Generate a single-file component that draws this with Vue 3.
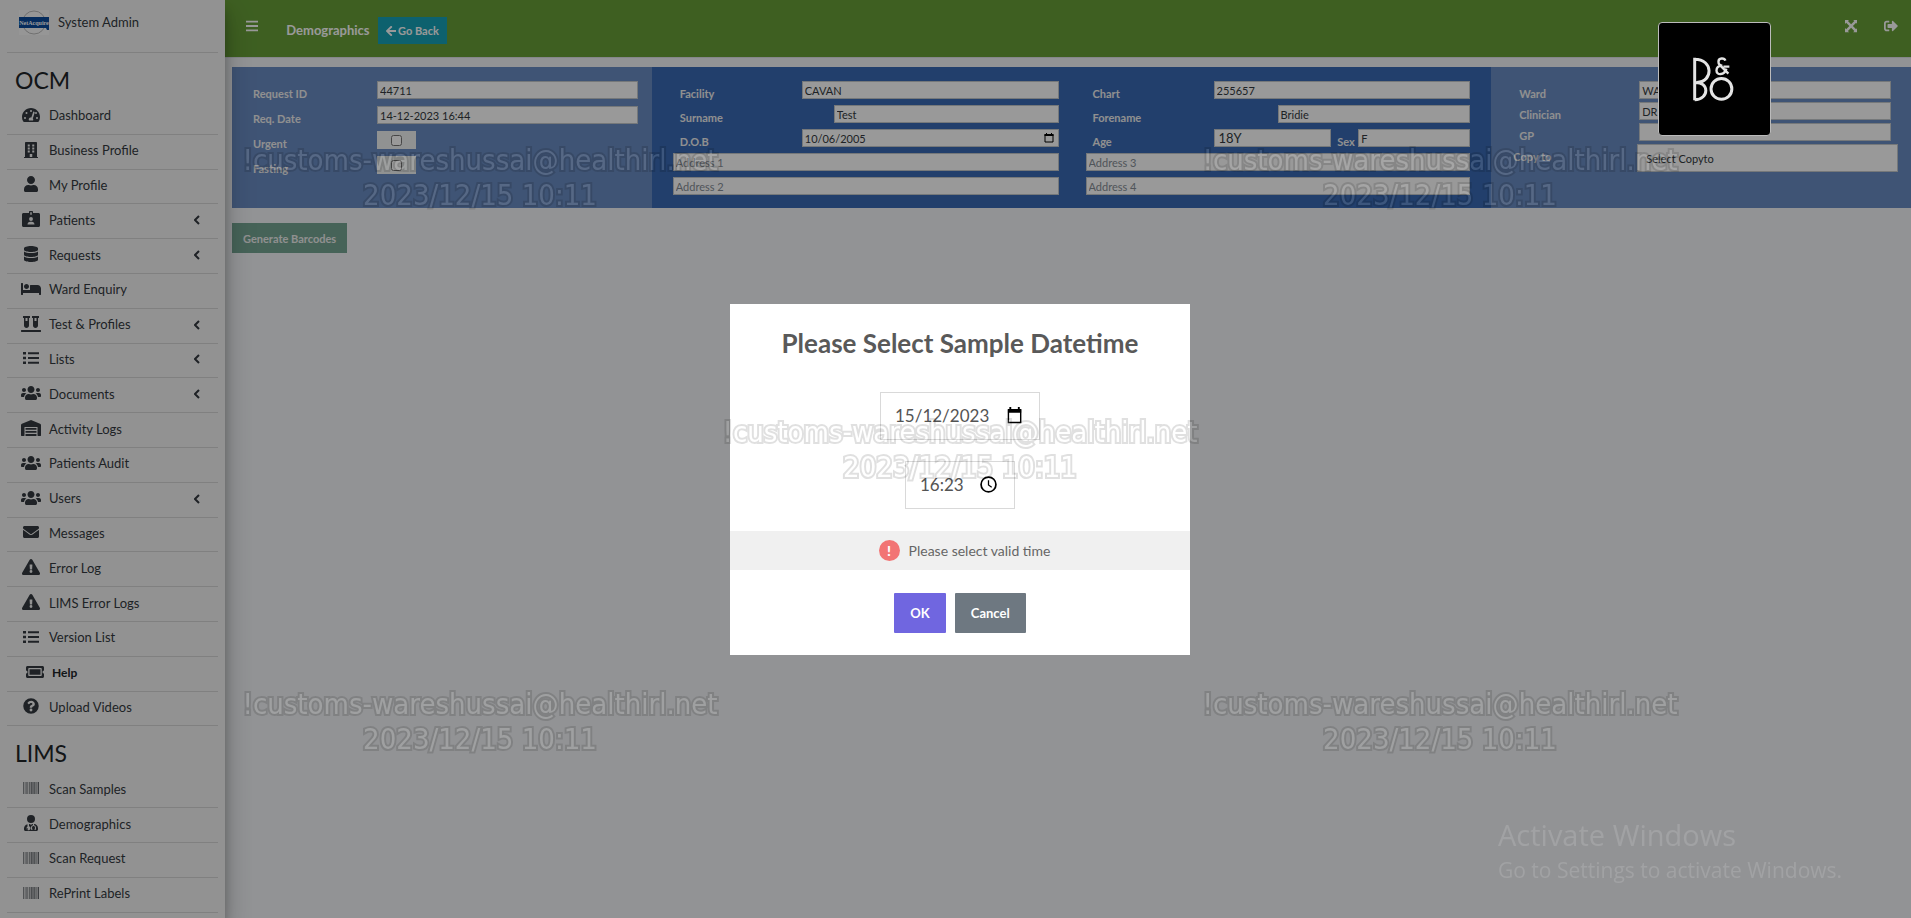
<script setup>
import { ref } from 'vue'

const shapes = {
  gauge: ['0 0 576 512', 'M288 32C129 32 0 161 0 320c0 53 14 102 39 145 6 9 16 15 27 15h444c11 0 21-6 27-15 25-43 39-92 39-145C576 161 447 32 288 32zM288 96a32 32 0 1 1 0 64 32 32 0 0 1 0-64zM96 384a32 32 0 1 1 0-64 32 32 0 0 1 0 64zM144 224a32 32 0 1 1 0-64 32 32 0 0 1 0 64zM391 155c13 4 20 18 15 30l-61 184c16 17 20 44 7 63H224c-20-30-3-80 35-94 14-5 27-5 40-1l61-183c5-13 18-3 31 1zM448 224a32 32 0 1 1 0-64 32 32 0 0 1 0 64zM480 384a32 32 0 1 1 0-64 32 32 0 0 1 0 64z'],
  building: ['0 0 448 512', 'M436 480h-20V24c0-13-11-24-24-24H56C43 0 32 11 32 24v456H12c-7 0-12 5-12 12v20h448v-20c0-7-5-12-12-12zM120 76h64v64h-64zM264 76h64v64h-64zM120 172h64v64h-64zM264 172h64v64h-64zM120 268h64v64h-64zM264 268h64v64h-64zM184 384h80v96h-80z'],
  user: ['0 0 448 512', 'M224 256c70.7 0 128-57.3 128-128S294.700 0 224 0 96 57.300 96 128s57.300 128 128 128zm89.600 32h-16.700c-22.200 10.200-46.900 16-72.900 16s-50.600-5.800-72.900-16h-16.700C60.200 288 0 348.200 0 422.400V464c0 26.500 21.500 48 48 48h352c26.500 0 48-21.500 48-48v-41.600c0-74.200-60.200-134.400-134.400-134.400z'],
  badge: ['0 0 576 512', 'M528 64H352V32c0-18-14-32-32-32h-64c-18 0-32 14-32 32v32H48C21 64 0 85 0 112v352c0 27 21 48 48 48h480c27 0 48-21 48-48V112c0-27-21-48-48-48zM264 40h48v80h-48zM288 192a62 62 0 1 1 0 124 62 62 0 0 1 0-124zM176 432c0-50 36-88 84-88h56c48 0 84 38 84 88z'],
  database: ['0 0 448 512', 'M448 73v46c0 40-100 73-224 73S0 159 0 119V73C0 33 100 0 224 0s224 33 224 73zM448 176v103c0 40-100 73-224 73S0 319 0 279V176c48 33 136 49 224 49s176-16 224-49zm0 160v103c0 40-100 73-224 73S0 479 0 439V336c48 33 136 49 224 49s176-16 224-49z'],
  bed: ['0 0 640 512', 'M176 256c44 0 80-36 80-80s-36-80-80-80-80 36-80 80 36 80 80 80zm352-128H304c-9 0-16 7-16 16v144H64V80c0-9-7-16-16-16H16C7 64 0 71 0 80v352c0 9 7 16 16 16h32c9 0 16-7 16-16v-48h512v48c0 9 7 16 16 16h32c9 0 16-7 16-16V240c0-62-50-112-112-112z'],
  vials: ['0 0 640 512', 'M72 64h24v240c0 44 36 80 80 80s80-36 80-80V64h24c4 0 8-4 8-8V8c0-4-4-8-8-8H72c-4 0-8 4-8 8v48c0 4 4 8 8 8zM144 64h64v96h-64zM624 448H16c-9 0-16 7-16 16v32c0 9 7 16 16 16h608c9 0 16-7 16-16v-32c0-9-7-16-16-16zM360 64h24v240c0 44 36 80 80 80s80-36 80-80V64h24c4 0 8-4 8-8V8c0-4-4-8-8-8H360c-4 0-8 4-8 8v48c0 4 4 8 8 8zM432 64h64v96h-64z'],
  list: ['0 0 512 512', 'M0 64h96v80H0zM0 216h96v80H0zM0 368h96v80H0zM160 72h352v64H160zM160 224h352v64H160zM160 376h352v64H160z'],
  users: ['0 0 640 512', 'M96 224c35 0 64-29 64-64s-29-64-64-64-64 29-64 64 29 64 64 64zm448 0c35 0 64-29 64-64s-29-64-64-64-64 29-64 64 29 64 64 64zm32 32h-64c-18 0-34 7-45 19 40 22 69 62 75 109h66c18 0 32-14 32-32v-32c0-35-29-64-64-64zm-256 0c62 0 112-50 112-112S382 32 320 32 208 82 208 144s50 112 112 112zm77 32h-8c-21 10-44 16-69 16s-48-6-69-16h-8c-63 0-115 52-115 115v29c0 27 22 48 48 48h288c27 0 48-21 48-48v-29c0-63-52-115-115-115zm-224-13c-11-12-27-19-45-19H64c-35 0-64 29-64 64v32c0 18 14 32 32 32h66c6-47 35-87 75-109z'],
  warehouse: ['0 0 640 512', 'M610 117L339 4a48 48 0 0 0-37 0L30 117C12 125 0 142 0 161v335c0 9 7 16 16 16h80c9 0 16-7 16-16V224h416v272c0 9 7 16 16 16h80c9 0 16-7 16-16V161c0-19-12-36-30-44zM144 256h352v56H144zM144 352h352v56H144zM144 448h352v64H144z'],
  envelope: ['0 0 512 512', 'M502 191c4-3 10 0 10 5v204c0 27-21 48-48 48H48c-27 0-48-21-48-48V196c0-5 6-8 10-5 22 17 52 39 154 113 21 16 57 48 92 48 36 0 72-33 92-48 102-74 132-96 154-113zM256 320c23 0 57-29 73-41 133-97 143-105 174-129 6-5 9-12 9-19v-19c0-27-21-48-48-48H48c-27 0-48 21-48 48v19c0 7 3 14 9 19 31 24 41 32 174 129 16 12 50 41 73 41z'],
  warning: ['0 0 576 512', 'M570 440c18 32-5 72-42 72H48c-37 0-60-40-42-72L246 24c19-32 65-32 84 0l240 416zM288 354a46 46 0 1 0 0 92 46 46 0 0 0 0-92zm-44-165l8 136c0 6 5 11 12 11h48c7 0 12-5 12-11l8-136c0-7-5-13-12-13h-64c-7 0-12 6-12 13z'],
  ticket: ['0 0 576 512', 'M576 208v-96c0-27-21-48-48-48H48c-27 0-48 21-48 48v96a48 48 0 0 1 0 96v96c0 27 21 48 48 48h480c27 0 48-21 48-48v-96a48 48 0 0 1 0-96zM96 128h384c13 0 24 11 24 24v208c0 13-11 24-24 24H96c-13 0-24-11-24-24V152c0-13 11-24 24-24zM112 168v176h352V168z'],
  help: ['0 0 512 512', 'M504 256a248 248 0 1 1-496 0 248 248 0 0 1 496 0zM263 90c-55 0-90 23-117 64-4 5-2 12 3 16l35 26c5 4 12 3 16-2 18-23 31-36 58-36 20 0 45 13 45 33 0 15-12 23-32 34-24 14-55 30-55 71v4c0 7 5 12 12 12h56c7 0 12-5 12-12v-1c0-29 83-30 83-107 0-58-60-102-116-102zM256 338a46 46 0 1 0 0 92 46 46 0 0 0 0-92z'],
  barcode: ['0 0 512 512', 'M0 64h20v384H0zM28 64h12v384H28zM64 64h14v384H64zM110 64h24v384h-24zM148 64h14v384h-14zM188 64h26v384h-26zM230 64h12v384h-12zM262 64h30v384h-30zM306 64h26v384h-26zM346 64h30v384h-30zM392 64h14v384h-14zM432 64h28v384h-28zM480 64h32v384h-32z'],
  doctor: ['0 0 448 512', 'M224 256a128 128 0 1 0 0-256 128 128 0 0 0 0 256zM104 424a24 24 0 1 1 0 48 24 24 0 0 1 0-48zM320 289v36c36 8 64 40 64 79v64h-48v-32h16v-32c0-30-23-52-48-52s-48 22-48 52v32h16v32h-48v-64c0-39 28-71 64-79v-37h-16l-48 20-48-20h-16v73c28 7 48 33 48 63a64 64 0 1 1-96-56v-76C46 308 0 360 0 422v42c0 27 21 48 48 48h352c27 0 48-21 48-48v-42c0-72-56-131-128-133z'],
  bars: ['0 0 448 512', 'M0 60h448v72H0zM0 220h448v72H0zM0 380h448v72H0z'],
  back: ['0 0 448 512', 'M258 444l-22 22c-10 9-25 9-34 0L7 273c-9-9-9-25 0-34L202 46c9-9 24-9 34 0l22 22c9 10 9 25 0 34L138 216h286c13 0 24 11 24 24v32c0 13-11 24-24 24H138l120 114c9 9 9 24 0 34z'],
  expand: ['0 0 448 512', 'M0 32h150l-43 43 117 117L341 75l-43-43h150v150l-43-43-117 117 117 117 43-43v150H298l43-43-117-117-117 117 43 43H0V330l43 43 117-117L43 139 0 182z'],
  exit: ['0 0 512 512', 'M497 273L329 441c-15 15-41 5-41-17v-96H152c-13 0-24-11-24-24v-96c0-13 11-24 24-24h136V88c0-21 26-32 41-17l168 168c9 9 9 25 0 34zM192 436v-40c0-7-5-12-12-12H96c-18 0-32-14-32-32V160c0-18 14-32 32-32h84c7 0 12-5 12-12V76c0-7-5-12-12-12H96c-53 0-96 43-96 96v192c0 53 43 96 96 96h84c7 0 12-5 12-12z'],
}

const sections = [
  {
    title: 'OCM',
    items: [
      { label: 'Dashboard', icon: 'gauge' },
      { label: 'Business Profile', icon: 'building' },
      { label: 'My Profile', icon: 'user' },
      { label: 'Patients', icon: 'badge', sub: true },
      { label: 'Requests', icon: 'database', sub: true },
      { label: 'Ward Enquiry', icon: 'bed' },
      { label: 'Test & Profiles', icon: 'vials', sub: true },
      { label: 'Lists', icon: 'list', sub: true },
      { label: 'Documents', icon: 'users', sub: true },
      { label: 'Activity Logs', icon: 'warehouse' },
      { label: 'Patients Audit', icon: 'users' },
      { label: 'Users', icon: 'users', sub: true },
      { label: 'Messages', icon: 'envelope' },
      { label: 'Error Log', icon: 'warning' },
      { label: 'LIMS Error Logs', icon: 'warning' },
      { label: 'Version List', icon: 'list' },
      { label: 'Help', icon: 'ticket', strong: true },
      { label: 'Upload Videos', icon: 'help' },
    ],
  },
  {
    title: 'LIMS',
    items: [
      { label: 'Scan Samples', icon: 'barcode', faint: true },
      { label: 'Demographics', icon: 'doctor' },
      { label: 'Scan Request', icon: 'barcode', faint: true },
      { label: 'RePrint Labels', icon: 'barcode', faint: true },
    ],
  },
]

const form = ref({
  request: '44711', date: '14-12-2023 16:44', urgent: false, fasting: false,
  facility: 'CAVAN', surname: 'Test', dob: '10/06/2005', a1: '', a2: '',
  chart: '255657', forename: 'Bridie', age: '18Y', sex: 'F', a3: '', a4: '',
  ward: 'WA', clinician: 'DR', gp: '',
})
const sampleDate = ref('15/12/2023')
const sampleTime = ref('16:23')
const marks = ['nw', 'ne', 'mid', 'sw', 'se']
</script>

<template>
  <div class="app">
    <aside class="sidebar">
      <div class="brand">
        <svg class="brand-logo" viewBox="0 0 30 25" aria-hidden="true">
          <rect width="30" height="25" fill="#fafafa" />
          <circle cx="15" cy="12.500" r="11.500" fill="none" stroke="#bbb" />
          <path d="M0 7h30v13h-2l-1-2H0z" fill="#0a4a9c" />
          <text x="15" y="15" text-anchor="middle" font-size="6" font-weight="700" fill="#fff" font-family="Liberation Serif, serif">NetAcquire</text>
        </svg>
        <span>System Admin</span>
      </div>
      <nav v-for="s in sections" :key="s.title">
        <h2>{{ s.title }}</h2>
        <ul>
          <li v-for="i in s.items" :key="i.label">
            <a href="#" :class="{ strong: i.strong }">
              <span class="slot" :class="{ faint: i.faint }">
                <svg :viewBox="shapes[i.icon][0]" aria-hidden="true"><path :d="shapes[i.icon][1]" fill-rule="evenodd" /></svg>
              </span>
              <span class="name">{{ i.label }}</span>
              <svg v-if="i.sub" class="chev" viewBox="0 0 6 10" aria-hidden="true"><path d="M5 1L1 5l4 4" /></svg>
            </a>
          </li>
        </ul>
      </nav>
    </aside>

    <div class="main">
      <header class="topbar">
        <button class="plain" aria-label="Toggle menu">
          <svg :viewBox="shapes.bars[0]"><path :d="shapes.bars[1]" /></svg>
        </button>
        <h1>Demographics</h1>
        <button class="go-back">
          <svg :viewBox="shapes.back[0]"><path :d="shapes.back[1]" /></svg>Go Back
        </button>
        <span class="spacer"></span>
        <button class="plain" aria-label="Full screen">
          <svg :viewBox="shapes.expand[0]"><path :d="shapes.expand[1]" /></svg>
        </button>
        <button class="plain exit" aria-label="Sign out">
          <svg :viewBox="shapes.exit[0]"><path :d="shapes.exit[1]" /></svg>
        </button>
      </header>

      <main>
        <form class="panels" @submit.prevent>
          <section class="panel request">
            <label for="rid">Request ID</label><input id="rid" v-model="form.request" class="field">
            <label for="rdate">Req. Date</label><input id="rdate" v-model="form.date" class="field">
            <label for="urgent">Urgent</label>
            <span class="tick"><input id="urgent" v-model="form.urgent" type="checkbox"></span>
            <label for="fasting">Fasting</label>
            <span class="tick"><input id="fasting" v-model="form.fasting" type="checkbox"></span>
          </section>

          <section class="panel dark left">
            <label for="fac">Facility</label><input id="fac" v-model="form.facility" class="field">
            <label for="sur">Surname</label><input id="sur" v-model="form.surname" class="field surname">
            <label for="dob">D.O.B</label>
            <span class="with-icon">
              <input id="dob" v-model="form.dob" class="field">
              <svg viewBox="0 0 10 10" aria-hidden="true"><path d="M1 1.500h8v7.500H1z" fill="none" stroke="#000" /><path d="M.5 1h9v2h-9zM2 0h1v1H2zM7 0h1v1H7z" /></svg>
            </span>
            <input v-model="form.a1" class="field wide" placeholder="Address 1" aria-label="Address 1">
            <input v-model="form.a2" class="field wide" placeholder="Address 2" aria-label="Address 2">
          </section>

          <section class="panel dark right">
            <label for="chart">Chart</label><input id="chart" v-model="form.chart" class="field">
            <label for="fore">Forename</label><input id="fore" v-model="form.forename" class="field forename">
            <label for="age">Age</label>
            <span class="age-sex">
              <input id="age" v-model="form.age" class="field age">
              <label for="sex">Sex</label>
              <input id="sex" v-model="form.sex" class="field sex">
            </span>
            <input v-model="form.a3" class="field wide" placeholder="Address 3" aria-label="Address 3">
            <input v-model="form.a4" class="field wide" placeholder="Address 4" aria-label="Address 4">
          </section>

          <section class="panel ward">
            <label for="ward">Ward</label><input id="ward" v-model="form.ward" class="field">
            <label for="clin">Clinician</label><input id="clin" v-model="form.clinician" class="field">
            <label for="gp">GP</label><input id="gp" v-model="form.gp" class="field">
            <label for="copy" class="copy-label">Copy to</label>
            <select id="copy" class="copy"><option>Select Copyto</option></select>
          </section>
        </form>
        <button class="generate">Generate Barcodes</button>
      </main>
    </div>

    <div class="overlay">
      <div class="modal" role="dialog" aria-labelledby="modal-title">
        <h2 id="modal-title">Please Select Sample Datetime</h2>
        <div class="picker date">
          <input v-model="sampleDate" aria-label="Sample date">
          <svg viewBox="0 0 16 18" aria-hidden="true"><path d="M1.500 3h13v13.500h-13z" fill="none" stroke="#000" stroke-width="1.500" /><path d="M1 2h14v4H1zM2.500 0h2v2h-2zM11.500 0h2v2h-2z" /></svg>
        </div>
        <div class="picker time">
          <input v-model="sampleTime" aria-label="Sample time">
          <svg viewBox="0 0 16 16" aria-hidden="true"><circle cx="8" cy="8" r="7" fill="none" stroke="#000" stroke-width="1.600" /><path d="M8 4v4.500l3 2" fill="none" stroke="#000" stroke-width="1.200" /></svg>
        </div>
        <p class="invalid"><span class="bang">!</span>Please select valid time</p>
        <div class="actions">
          <button class="ok">OK</button>
          <button class="cancel">Cancel</button>
        </div>
      </div>
    </div>

    <svg class="bo" viewBox="0 0 112 113" role="img" aria-label="B&amp;O">
      <g fill="none" stroke="#e4e4e4" stroke-width="3">
        <path d="M36 35v43M36 36.500c19 0 19 23 2 23.500M36 60c15-1 15 17 0 17.500" />
        <circle cx="63" cy="66.500" r="10.500" />
        <path stroke-width="2.400" d="M67 38c-1-3-7-3-7 1 0 3 2 4 4 4-4 0-6 2-6 5 0 5 8 5 10-2M62 43l8 8M65 44h6" />
      </g>
    </svg>

    <div v-for="m in marks" :key="m" class="mark" :class="m" aria-hidden="true">
      !customs-wareshussai@healthirl.net<br>2023/12/15 10:11
    </div>
    <div class="activate">
      <strong>Activate Windows</strong>
      <span>Go to Settings to activate Windows.</span>
    </div>
  </div>
</template>

<style>
html, body { overflow: hidden; background: #f4f6f9; }
</style>

<style scoped>
* { box-sizing: border-box; }
.app {
  display: flex;
  height: 100vh;
  overflow: hidden;
  font-family: Lato, "Open Sans", sans-serif;
  font-size: 13px;
  color: #343a40;
}
button, input, select { font: inherit; color: inherit; }
button { border: 0; padding: 0; }
h1, h2, p, ul { margin: 0; padding: 0; }

.sidebar {
  position: relative;
  z-index: 1;
  flex: 0 0 225px;
  padding: 0 7px;
  overflow: hidden;
  background: #f4f4f4;
  box-shadow: 0 14px 28px rgba(0, 0, 0, .25), 0 10px 10px rgba(0, 0, 0, .22);
}
.brand {
  display: flex;
  align-items: center;
  gap: 9px;
  height: 53px;
  padding: 0 12px 8px;
  border-bottom: 1px solid #d6d6d6;
}
.brand-logo { width: 30px; height: 25px; }
.sidebar h2 {
  height: 47px;
  padding: 10px 8px 0;
  font-size: 23px;
  font-weight: 400;
  line-height: 34px;
  color: #212529;
}
.sidebar ul { list-style: none; }
.sidebar li {
  border-bottom: 1px solid #d6d6d6;
  padding: 4px 0 6px;
  font-size: 14px;
  line-height: 1.7;
}
.sidebar a {
  display: flex;
  align-items: center;
  gap: 6px;
  padding: 0 18px 0 12px;
  color: #343a40;
  text-decoration: none;
}
.slot { display: flex; justify-content: center; width: 24px; margin-bottom: 2px; }
.slot svg { height: 16px; fill: #343a40; }
.slot.faint svg { opacity: .75; }
.name { flex: 1; font-size: 13px; line-height: inherit; }
.name { line-height: 1; }
.sidebar a { height: 1.7em; }
.chev { width: 6px; height: 10px; fill: none; stroke: #343a40; stroke-width: 2; }
.sidebar a.strong { padding-left: 16px; gap: 5px; color: #212529; }
.strong .name { font-size: 12px; font-weight: 700; }

.main { flex: 1; min-width: 0; }
.topbar {
  display: flex;
  align-items: center;
  height: 58px;
  padding: 0 13px 0 21px;
  background: #689f38;
  border-bottom: 1px solid #dee2e6;
  color: #fff;
}
.topbar svg { height: 14px; fill: #fff; }
.plain { display: flex; margin-bottom: 5px; background: none; }
.topbar h1 { margin: 2px 0 0 28px; font-size: 13px; font-weight: 700; }
.go-back {
  display: flex;
  align-items: center;
  gap: 2px;
  height: 27px;
  margin: 4px 0 0 8px;
  padding: 0 8px;
  background: #17a2b8;
  font-size: 11px;
  font-weight: 700;
}
.topbar .go-back svg { height: 12px; }
.spacer { flex: 1; }
.exit { margin-left: 27px; }

main { padding: 9px 0 0 7px; }
.panels { display: grid; grid-template-columns: repeat(4, 1fr); }
.panel {
  display: grid;
  grid-template-columns: 124px 1fr;
  align-content: start;
  gap: 7px 0;
  padding: 14px 14px 13px 21px;
  background: #6a8cc3;
}
.panel label {
  padding-top: 4px;
  font-size: 11px;
  font-weight: 700;
  line-height: 18px;
  height: 18px;
  color: #f0f0f0;
}
.field {
  width: 100%;
  min-width: 0;
  height: 18px;
  padding: 0 2px;
  border: 1px solid #c4c8cc;
  border-radius: 0;
  background: #fff;
  font-size: 11px;
  line-height: 16px;
  color: #343a40;
}
.field::placeholder { color: #868e96; opacity: 1; }
.tick {
  display: flex;
  align-items: center;
  justify-content: center;
  width: 39px;
  height: 18px;
  background: #f0f4f4;
}
.tick input { width: 11px; height: 11px; margin: 0; }
.dark { background: #3969b4; row-gap: 6px; }
.dark > label { padding-left: 7px; }
.dark.left { grid-template-columns: 129px 1fr; padding-right: 13px; }
.dark.right { grid-template-columns: 128px 1fr; padding: 14px 21px 13px 14px; }
.wide { grid-column: 1 / -1; }
.surname { margin-left: 32px; width: auto; }
.forename { margin-left: 64px; width: auto; }
.with-icon { position: relative; display: flex; }
.with-icon svg { position: absolute; right: 5px; top: 4px; width: 10px; height: 10px; }
.age-sex { display: flex; }
.age-sex .age { flex: 117; width: 0; padding-left: 4px; font-size: 13px; }
.age-sex .sex { flex: 113; width: 0; }
.age-sex label { width: 27px; padding-left: 6px; }
.ward { grid-template-columns: 126px 1fr; row-gap: 3px; padding-left: 22px; padding-right: 13px; }
.ward label { padding-left: 6px; }
.ward .field { width: auto; margin-right: 7px; }
.ward .copy-label { padding-left: 0; }
.copy {
  width: auto;
  height: 28px;
  margin-left: -2px;
  padding: 0 8px;
  appearance: none;
  border: 1px solid #c4c8cc;
  border-radius: 0;
  background: #fff;
  font-size: 11px;
}
.generate {
  height: 30px;
  margin-top: 15px;
  padding: 0 11px;
  background: #75a593;
  color: #f0f0f0;
  font-size: 11px;
  font-weight: 700;
}

.overlay {
  position: fixed;
  inset: 0;
  z-index: 2;
  display: flex;
  align-items: center;
  justify-content: center;
  padding: 40px 0 0 9px;
  background: rgba(0, 0, 0, .4);
}
.modal {
  display: flex;
  flex-direction: column;
  align-items: center;
  width: 460px;
  padding-bottom: 22px;
  background: #fff;
  color: #545454;
}
.modal h2 {
  padding: 20px 0 30px;
  font-size: 26px;
  font-weight: 700;
  line-height: 38px;
  color: #595959;
}
.picker {
  display: flex;
  align-items: center;
  height: 48px;
  padding: 0 17px 0 14px;
  border: 1px solid #d9d9d9;
}
.picker input {
  flex: 1;
  min-width: 0;
  padding: 0;
  border: 0;
  background: none;
  font-size: 17px;
}
.picker svg { height: 17px; }
.date { width: 160px; }
.time { width: 110px; margin-top: 21px; }
.invalid {
  display: flex;
  align-items: center;
  justify-content: center;
  align-self: stretch;
  height: 39px;
  margin: 22px 0 23px;
  padding-left: 9px;
  gap: 9px;
  background: #f0f0f0;
  color: #666;
  font-size: 14px;
}
.bang {
  width: 21px;
  height: 21px;
  border-radius: 50%;
  background: #f27474;
  color: #fff;
  font-weight: 900;
  line-height: 21px;
  text-align: center;
}
.actions { display: flex; gap: 9px; }
.actions button { height: 40px; padding: 0 16px; border-radius: 1px; color: #fff; font-weight: 700; }
.ok { background: #7066e0; }
.cancel { background: #6e7881; }

.bo {
  position: fixed;
  top: 22px;
  right: 140px;
  z-index: 3;
  width: 113px;
  height: 114px;
  border: 1px solid #bbb;
  border-radius: 4px;
  background: #000;
}
.mark {
  position: fixed;
  z-index: 4;
  width: 480px;
  font-family: "DejaVu Sans Condensed", "Noto Sans", sans-serif;
  font-size: 29px;
  line-height: 35px;
  text-align: center;
  white-space: nowrap;
  color: #fff;
  -webkit-text-stroke: 4px #000;
  paint-order: stroke fill;
  opacity: .12;
  pointer-events: none;
}
.nw, .sw { left: 240px; }
.mid { left: 720px; }
.ne, .se { left: 1200px; }
.nw, .ne { top: 143px; }
.mid { top: 415px; }
.sw, .se { top: 687px; }
.activate {
  position: fixed;
  z-index: 4;
  right: 70px;
  bottom: 33px;
  display: flex;
  flex-direction: column;
  width: 343px;
  font-family: "Open Sans", sans-serif;
  color: rgba(255, 255, 255, .14);
  font-size: 21px;
  line-height: 30px;
  white-space: nowrap;
}
.activate strong { font-size: 29px; font-weight: 400; line-height: 40px; }
</style>
